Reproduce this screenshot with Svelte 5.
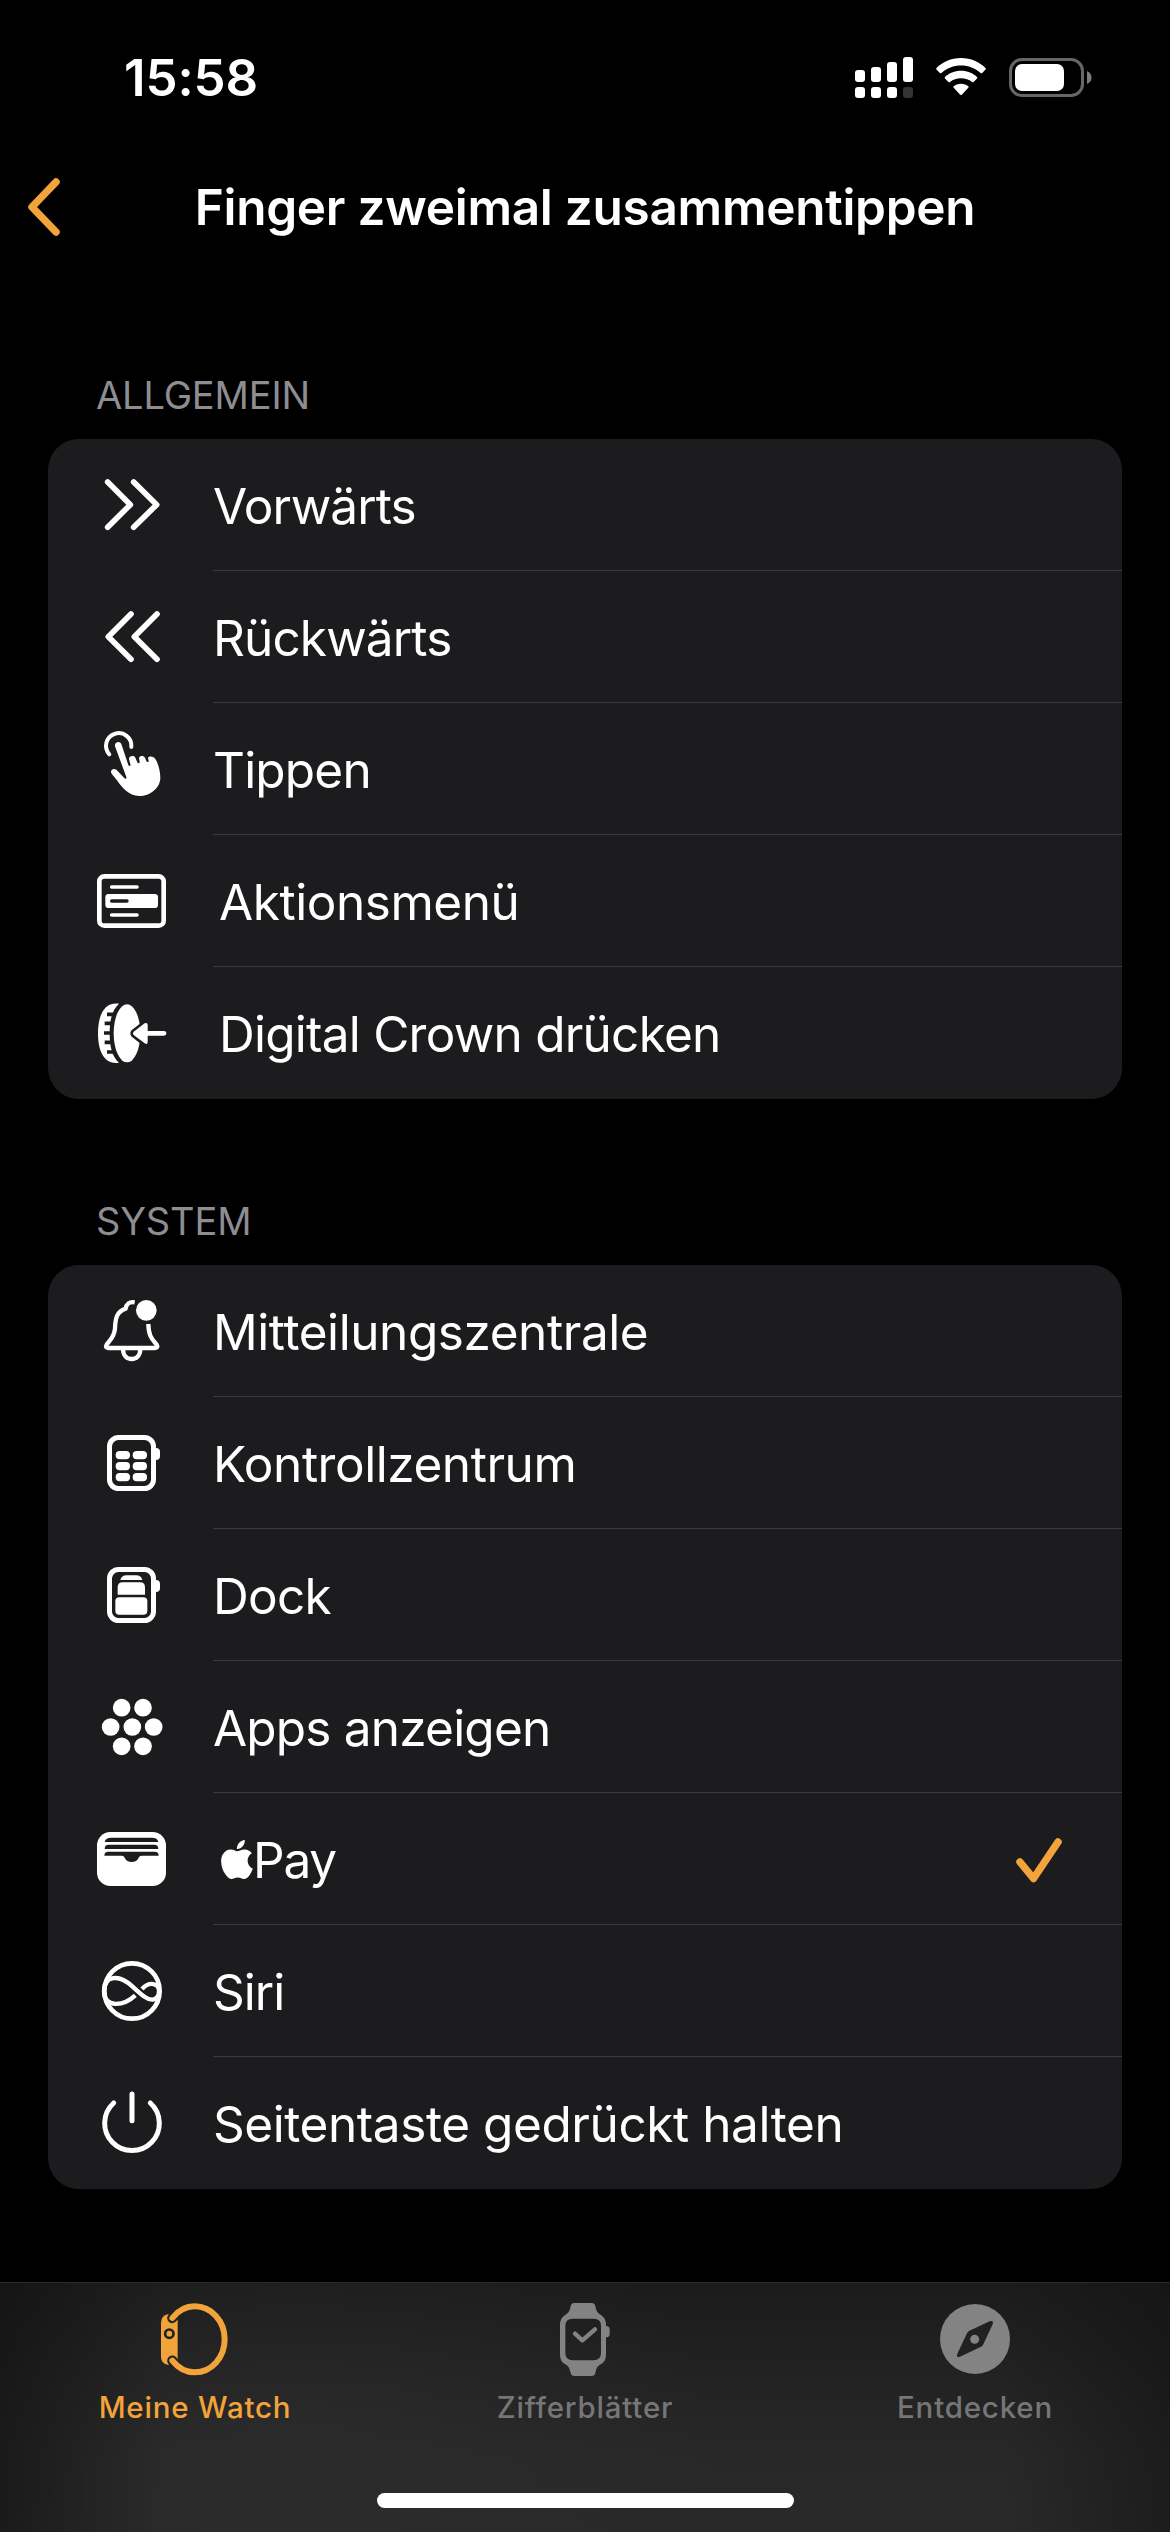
<script lang="ts">
  type Item = { id: string; label: string; tracking: number; wide?: boolean };

  const general: Item[] = [
    { id: "forward", label: "Vorwärts", tracking: -0.9 },
    { id: "backward", label: "Rückwärts", tracking: -0.85 },
    { id: "tap", label: "Tippen", tracking: -0.8 },
    { id: "menu", label: "Aktionsmenü", tracking: -0.45, wide: true },
    { id: "crown", label: "Digital Crown drücken", tracking: -0.75, wide: true },
  ];

  const system: Item[] = [
    { id: "notifications", label: "Mitteilungszentrale", tracking: -0.43 },
    { id: "control", label: "Kontrollzentrum", tracking: -0.45 },
    { id: "dock", label: "Dock", tracking: -0.7 },
    { id: "apps", label: "Apps anzeigen", tracking: -0.8 },
    { id: "pay", label: "Pay", tracking: -1.2, wide: true },
    { id: "siri", label: "Siri", tracking: -1 },
    { id: "side", label: "Seitentaste gedrückt halten", tracking: -0.43 },
  ];

  const sections = [
    { title: "Allgemein", items: general },
    { title: "System", items: system },
  ];

  let selected = $state("pay");
  let tab = $state("watch");
</script>

{#snippet icon(id: string)}
  {#if id === "forward"}
    <svg class="icon line" viewBox="150 309 252 252" stroke-width="17">
      <path d="M203 366L271 434L203 502M281 366L350 434L281 502" />
    </svg>
  {:else if id === "backward"}
    <svg class="icon line" viewBox="150 705 252 252" stroke-width="17">
      <path d="M273 762L205 830L273 898M351 762L283 830L351 898" />
    </svg>
  {:else if id === "tap"}
    <svg class="icon" viewBox="150 81 252 252">
      <path class="stroke" stroke-width="12" d="M208 163A38 38 0 1 1 274 141" />
      <path d="M225 139C222 125 240 121 244 132L265 195C267 200 273 198 271 193L267 177C266 168 281 165 286 173L292 187C294 192 300 190 299 185L297 175C298 166 311 166 315 173L319 183C321 188 327 187 326 182L324 174C327 168 339 168 346 177C355 190 361 214 361 234C360 265 330 288 298 288C265 286 247 263 232 242L215 221C208 211 221 202 230 210L252 233C256 238 261 236 259 231Z" />
    </svg>
  {:else if id === "menu"}
    <svg class="icon" viewBox="150 477 252 252">
      <rect class="stroke" stroke-width="14" x="178" y="529" width="193" height="148" rx="15" />
      <rect x="196" y="582" width="158" height="42" rx="10" />
      <path class="stroke" stroke-width="11" d="M215 561H291M215 645H291" />
      <path class="cut" stroke-width="10" d="M215 603H261" />
    </svg>
  {:else if id === "crown"}
    <svg class="icon" viewBox="150 873 252 252">
      <path d="M237 911C190 905 174 950 174 1000S190 1095 237 1088C216 1070 209 1040 209 1000S216 930 237 911Z" />
      <path class="cut butt" stroke-width="11" d="M201 943H220M194 970H214M192 999H212M194 1027H214M201 1056H220" />
      <ellipse cx="261" cy="1000" rx="40" ry="87" />
      <path class="cut" stroke-width="28" d="M320 973L285 1000L320 1028Z" />
      <path d="M281 995L314 970Q323 966 323 976V1025Q323 1035 314 1030L281 1005Q276 1000 281 995Z" />
      <path class="stroke" stroke-width="14" d="M318 1000H372" />
    </svg>
  {:else if id === "notifications"}
    <svg class="icon" viewBox="150 327 252 252">
      <path class="stroke butt" stroke-width="13" d="M284 367C268 364 259 372 257 386C230 395 226 415 225 445C223 472 210 479 200 494C196 500 198 504 205 504H345C352 504 354 500 350 494C338 478 326 472 325 432" />
      <path class="stroke butt" stroke-width="13" d="M249 508C250 527 260 537 275 537S300 527 301 508" />
      <circle cx="319" cy="391" r="31" />
    </svg>
  {:else if id === "control"}
    <svg class="icon" viewBox="150 723 252 252">
      <rect class="stroke" stroke-width="15" x="208.500" y="772.500" width="132" height="153" rx="27" />
      <path d="M344 804H348Q360 804 360 816V828Q360 840 348 840H344Z" />
      {#each [813, 846, 879] as y}
        <rect x="227" {y} width="43" height="25" rx="12" />
        <rect x="278" {y} width="43" height="25" rx="12" />
      {/each}
    </svg>
  {:else if id === "dock"}
    <svg class="icon" viewBox="150 159 252 252">
      <rect class="stroke" stroke-width="15" x="208.500" y="208.500" width="132" height="153" rx="27" />
      <path d="M344 240H348Q360 240 360 252V264Q360 276 348 276H344Z" />
      <path d="M241 240Q244 226 260 226H288Q304 226 307 240Z" />
      <path d="M233 284V262Q233 247 248 247H300Q315 247 315 262V284Z" />
      <rect x="226" y="292" width="96" height="52" rx="12" />
    </svg>
  {:else if id === "apps"}
    <svg class="icon" viewBox="150 555 252 252">
      {#each [[245, 623], [309, 623], [212, 681], [277, 681], [341, 681], [245, 739], [309, 739]] as [cx, cy]}
        <circle {cx} {cy} r="26.500" />
      {/each}
    </svg>
  {:else if id === "pay"}
    <svg class="icon" viewBox="150 51 252 252">
      <rect x="171" y="96" width="207" height="162" rx="40" />
      <path class="hole" d="M194 126Q196 113 215 113H335Q353 113 355 126Z" />
      <path class="hole" d="M194 147Q194 134 206 134H343Q355 134 355 147Z" />
      <path class="hole" d="M193 167Q193 155 205 155H344Q356 155 356 167H305Q298 167 296 173Q290 186 275 186T254 173Q252 167 245 167Z" />
    </svg>
  {:else if id === "siri"}
    <svg class="icon" viewBox="150 447 252 252">
      <circle class="stroke" stroke-width="14" cx="276" cy="573" r="83" />
      <path class="stroke butt" stroke-width="13" d="M286 586C250 619 193 625 192 574C193 524 238 523 277 559C308 588 323 600 338 599C350 597 357 588 357 574C357 548 327 544 306 567" />
    </svg>
  {:else if id === "side"}
    <svg class="icon line" viewBox="150 843 252 252" stroke-width="15">
      <path d="M221 909A82 82 0 1 0 331 909M276 882V962" />
    </svg>
  {/if}
{/snippet}

<div class="screen">
  <header class="status">
    <span class="time">15:58</span>
    <div class="indicators">
      <svg width="58" height="42" viewBox="0 0 58 42" fill="#fff">
        <rect x="0" y="14" width="10" height="12" rx="3" />
        <rect x="16" y="11" width="10" height="15" rx="3" />
        <rect x="32" y="6" width="10" height="20" rx="3" />
        <rect x="48" y="1" width="10" height="25" rx="3" />
        <rect x="0" y="31" width="10" height="11" rx="3" />
        <rect x="16" y="31" width="10" height="11" rx="3" />
        <rect x="32" y="31" width="10" height="11" rx="3" />
        <rect x="48" y="31" width="10" height="11" rx="3" fill="#333" />
      </svg>
      <svg width="50" height="38" viewBox="0 0 50 38" fill="#fff">
        <path d="M25 0C35 0 43.500 4 49.500 10Q50.200 10.800 49.500 11.600L46.200 15Q45.400 15.700 44.600 15C39 10 32.500 7.500 25 7.500S11 10 5.400 15Q4.600 15.700 3.800 15L.5 11.600Q-.2 10.800 .5 10C6.500 4 15 0 25 0Z" />
        <path d="M25 12.800C31.500 12.800 37 15.200 41 19Q41.700 19.800 41 20.600L37.600 24Q36.800 24.700 36 24C33 21.600 29.200 20.300 25 20.300S17 21.600 14 24Q13.200 24.700 12.400 24L9 20.600Q8.300 19.800 9 19C13 15.200 18.500 12.800 25 12.800Z" />
        <path d="M25 25.800C28 25.800 30.500 26.800 32.300 28.300Q33 29 32.300 29.800L25.800 36.700Q25 37.500 24.200 36.700L17.700 29.800Q17 29 17.700 28.300C19.500 26.800 22 25.800 25 25.800Z" />
      </svg>
      <svg width="83" height="39" viewBox="0 0 83 39">
        <rect x="1.500" y="1.500" width="72" height="36" rx="11.500" fill="none" stroke="#666" stroke-width="3" />
        <rect x="6" y="6" width="49" height="27" rx="7" fill="#fff" />
        <path d="M78 13Q82.500 15 82.500 19.500T78 26Z" fill="#7d7d7d" />
      </svg>
    </div>
  </header>

  <nav class="navbar">
    <button class="back" aria-label="Zurück">
      <svg width="33" height="58" viewBox="0 0 33 58">
        <path d="M29 4L5 29L29 54" />
      </svg>
    </button>
    <h1>Finger zweimal zusammentippen</h1>
  </nav>

  <main>
    {#each sections as section}
      <section>
        <h2>{section.title}</h2>
        <div class="card">
          {#each section.items as item}
            <button class="row" onclick={() => (selected = item.id)}>
              {@render icon(item.id)}
              <span class="content" class:wide={item.wide}>
                {#if item.id === "pay"}
                  <svg class="apple" viewBox="2.200 0 19.600 24">
                    <path d="M12.152 6.896c-.948 0-2.415-1.078-3.960-1.040-2.040.027-3.910 1.183-4.961 3.014-2.117 3.675-.546 9.103 1.519 12.090 1.013 1.454 2.208 3.090 3.792 3.039 1.520-.065 2.090-.987 3.935-.987 1.831 0 2.350.987 3.960.948 1.637-.026 2.676-1.480 3.676-2.948 1.156-1.688 1.636-3.325 1.662-3.415-.039-.013-3.182-1.221-3.220-4.857-.026-3.040 2.480-4.494 2.597-4.559-1.429-2.090-3.623-2.324-4.390-2.376-2-.156-3.675 1.090-4.610 1.090zM15.530 3.830c.843-1.012 1.400-2.427 1.245-3.830-1.207.052-2.662.805-3.532 1.818-.780.896-1.454 2.338-1.273 3.714 1.338.104 2.715-.688 3.559-1.701" />
                  </svg>
                {/if}
                <span class="label" style:letter-spacing="{item.tracking}px">{item.label}</span>
                {#if selected === item.id}
                  <svg class="check" width="46" height="45" viewBox="0 0 46 45">
                    <path d="M4 24L17.500 40.500L42 4" />
                  </svg>
                {/if}
              </span>
            </button>
          {/each}
        </div>
      </section>
    {/each}
  </main>

  <footer class="tabbar">
    <div class="tabs">
      <button class="tab" class:active={tab === "watch"} onclick={() => (tab = "watch")}>
        <svg class="icon" viewBox="459 108 252 252">
          <path d="M505 162Q483 167 483 188V290Q483 311 505 315L533 297V180Z" />
          <path class="gap" stroke-width="31" d="M517 174L520 170M517 302L520 306" />
          <path class="stroke" stroke-width="18" d="M517 174C535 151 558 139 584 139C634 139 674 183 674 238S634 337 584 337C558 337 535 325 517 302" />
          <circle class="dark" cx="508" cy="221" r="16.500" />
          <circle cx="508" cy="221" r="8.500" />
        </svg>
        <span>Meine Watch</span>
      </button>
      <button class="tab" class:active={tab === "faces"} onclick={() => (tab = "faces")}>
        <svg class="icon" viewBox="429 108 252 252">
          <path fill-rule="evenodd" d="M523 129H575Q584 129 586 138C589 152 591 158 602 164Q618 174 618 194V284Q618 304 602 313C591 320 589 326 586 339Q584 348 575 348H523Q514 348 512 339C509 326 507 320 496 313Q480 304 480 284V194Q480 174 496 164C507 158 509 152 512 138Q514 129 523 129ZM518 176Q496 176 496 198V279Q496 301 518 301H581Q603 301 603 279V198Q603 176 581 176Z" />
          <path d="M616 198H618Q629 198 629 209V221Q629 232 618 232H616Z" />
          <path class="stroke" stroke-width="13" d="M525 221L547 241L585 208" />
        </svg>
        <span>Zifferblätter</span>
      </button>
      <button class="tab" class:active={tab === "discover"} onclick={() => (tab = "discover")}>
        <svg class="icon" viewBox="399 108 252 252">
          <circle cx="525" cy="237" r="105" />
          <path class="dark" d="M508 212L569 184Q582 180 578 193L550 253Q548 258 543 260L480 290Q467 294 472 281L501 220Q503 215 508 212Z" />
          <circle cx="524" cy="238" r="13.500" />
        </svg>
        <span>Entdecken</span>
      </button>
    </div>
    <div class="home-indicator"></div>
  </footer>
</div>

<style>
  :global(body) {
    background: #000;
  }

  .screen {
    --accent: #f2a33a;
    --card: #1c1c1e;
    width: 1170px;
    height: 2532px;
    display: flex;
    flex-direction: column;
    overflow: hidden;
    background: #000;
    color: #fff;
    font-family: Inter, "Liberation Sans", sans-serif;
  }

  button {
    padding: 0;
    border: none;
    background: none;
    color: inherit;
    font: inherit;
    text-align: left;
    cursor: pointer;
  }

  .status {
    display: flex;
    justify-content: space-between;
    height: 141px;
    padding: 0 78px 0 124px;
    box-sizing: border-box;
  }

  .time {
    margin-top: 48px;
    font-size: 51px;
    line-height: 60px;
    font-weight: 600;
    letter-spacing: -0.1px;
  }

  .indicators {
    display: flex;
    align-items: flex-start;
    gap: 23px;
    padding-top: 56px;
  }

  .indicators svg + svg {
    margin-top: 2px;
  }

  .navbar {
    display: grid;
    grid-template-columns: 100px 1fr 100px;
    align-items: center;
    height: 132px;
  }

  .back {
    display: flex;
    padding-left: 27px;
  }

  .back path,
  .check path {
    fill: none;
    stroke: var(--accent);
    stroke-width: 7.5;
    stroke-linecap: round;
    stroke-linejoin: round;
  }

  h1 {
    margin: -1px 0 0;
    font-size: 49.5px;
    font-weight: 600;
    letter-spacing: -0.27px;
    text-align: center;
    white-space: nowrap;
  }

  main {
    flex: 1;
    padding: 0 48px;
  }

  section {
    padding-top: 99px;
  }

  h2 {
    height: 67px;
    margin: 0 0 0 48px;
    color: #8d8d92;
    font-size: 38px;
    font-weight: 400;
    line-height: 46px;
    letter-spacing: -0.15px;
    text-transform: uppercase;
  }

  .card {
    background: var(--card);
    border-radius: 31px;
    overflow: hidden;
  }

  .row {
    display: flex;
    align-items: center;
    width: 100%;
    height: 132px;
    padding-left: 42px;
  }

  .icon {
    flex: none;
    width: 84px;
    height: 84px;
    fill: currentColor;
  }

  .line,
  .icon .stroke {
    fill: none;
    stroke: currentColor;
    stroke-linecap: round;
    stroke-linejoin: round;
  }

  .icon .cut {
    fill: none;
    stroke: var(--card);
    stroke-linecap: round;
    stroke-linejoin: round;
  }

  .icon .butt {
    stroke-linecap: butt;
  }

  .icon .hole {
    fill: var(--card);
  }

  .content {
    flex: 1;
    display: flex;
    align-items: center;
    height: 100%;
    margin-left: 39px;
    border-bottom: 1px solid #3a3a3c;
    box-sizing: border-box;
    font-size: 49.5px;
  }

  .row:last-child .content {
    border-bottom-color: transparent;
  }

  .label {
    padding-top: 2px;
  }

  .wide .label {
    padding-left: 6px;
  }

  .apple {
    width: 32px;
    height: 39px;
    margin: 1px -6px 0 8px;
    fill: #fff;
  }

  .check {
    margin: 3px 60px 0 auto;
  }

  .tabbar {
    height: 250px;
    border-top: 1px solid #2b2b2b;
    box-sizing: border-box;
    background:
      linear-gradient(90deg, rgba(16, 16, 16, 0.6), transparent 14%, transparent 86%, rgba(16, 16, 16, 0.5)),
      radial-gradient(ellipse 420px 260px at 300px 60%, rgba(50, 50, 50, 0.35), transparent),
      linear-gradient(#1b1b1b, #282828 70%, #292929);
  }

  .tabs {
    display: grid;
    grid-template-columns: repeat(3, 1fr);
    height: 210px;
  }

  .tab {
    display: flex;
    flex-direction: column;
    align-items: center;
    padding-top: 13px;
    color: #838383;
  }

  .tab span {
    margin-top: 9px;
    color: #767676;
    font-size: 29.5px;
    font-weight: 500;
    line-height: 36px;
    letter-spacing: 0.8px;
  }

  .tab.active,
  .tab.active span {
    color: var(--accent);
  }

  .tab .gap {
    fill: none;
    stroke: #232323;
    stroke-linecap: round;
  }

  .tab .dark {
    fill: #212121;
  }

  .home-indicator {
    width: 417px;
    height: 15px;
    margin: 0 auto;
    border-radius: 8px;
    background: #fff;
  }
</style>
